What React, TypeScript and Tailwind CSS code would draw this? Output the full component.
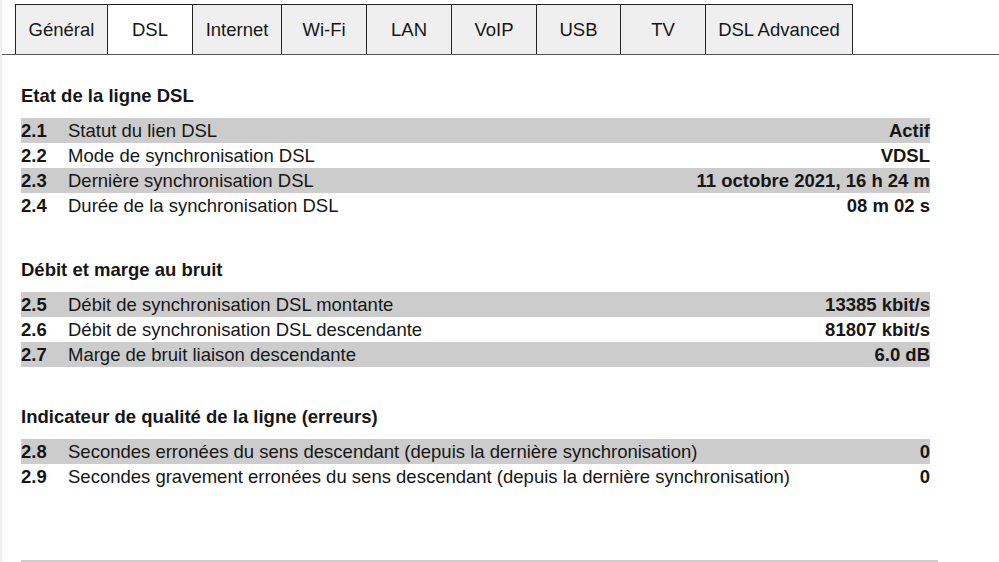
import React from 'react';

const TABS: { label: string; w: string; active?: boolean }[] = [
  { label: 'Général', w: 'w-[92px]' },
  { label: 'DSL', w: 'w-[85px]', active: true },
  { label: 'Internet', w: 'w-[89px]' },
  { label: 'Wi-Fi', w: 'w-[85px]' },
  { label: 'LAN', w: 'w-[85px]' },
  { label: 'VoIP', w: 'w-[85px]' },
  { label: 'USB', w: 'w-[84px]' },
  { label: 'TV', w: 'w-[85px]' },
  { label: 'DSL Advanced', w: 'w-[148px]' },
];

interface Row {
  num: string;
  label: string;
  value: string;
}

const SECTIONS: { title: string; mt: string; rows: Row[] }[] = [
  {
    title: 'Etat de la ligne DSL',
    mt: 'mt-[30px]',
    rows: [
      { num: '2.1', label: 'Statut du lien DSL', value: 'Actif' },
      { num: '2.2', label: 'Mode de synchronisation DSL', value: 'VDSL' },
      { num: '2.3', label: 'Dernière synchronisation DSL', value: '11 octobre 2021, 16 h 24 m' },
      { num: '2.4', label: 'Durée de la synchronisation DSL', value: '08 m 02 s' },
    ],
  },
  {
    title: 'Débit et marge au bruit',
    mt: 'mt-[41px]',
    rows: [
      { num: '2.5', label: 'Débit de synchronisation DSL montante', value: '13385 kbit/s' },
      { num: '2.6', label: 'Débit de synchronisation DSL descendante', value: '81807 kbit/s' },
      { num: '2.7', label: 'Marge de bruit liaison descendante', value: '6.0 dB' },
    ],
  },
  {
    title: 'Indicateur de qualité de la ligne (erreurs)',
    mt: 'mt-[39px]',
    rows: [
      { num: '2.8', label: 'Secondes erronées du sens descendant (depuis la dernière synchronisation)', value: '0' },
      { num: '2.9', label: 'Secondes gravement erronées du sens descendant (depuis la dernière synchronisation)', value: '0' },
    ],
  },
];

export default function App() {
  return (
    <div className="w-[999px] h-[562px] overflow-hidden bg-white border-l-2 border-[#efefef] text-[#161616] [font-family:'Liberation_Sans',Arial,sans-serif]">
      {/* Tabs */}
      <div className="pt-[4px] pl-[13px] border-b border-[#555]">
        <div className="flex">
          {TABS.map((t, i) => (
            <div key={t.label}
              className={`${t.w} h-[50px] flex items-center justify-center text-[18.5px] border-t border-l border-[#222] ${
                i === TABS.length - 1 ? 'border-r' : ''} ${t.active ? 'bg-white' : 'bg-[#efefef]'}`}>
              {t.label}
            </div>
          ))}
        </div>
      </div>

      {/* Sections */}
      <div className="pl-[19px] w-[928px]">
        {SECTIONS.map((s) => (
          <div key={s.title} className={s.mt}>
            <h2 className="text-[18.5px] font-bold leading-[22px] mb-[11px]">{s.title}</h2>
            <div>
              {s.rows.map((r, i) => (
                <div key={r.num}
                  className={`flex items-center h-[25px] text-[18.5px] ${i % 2 === 0 ? 'bg-[#cccccc]' : ''}`}>
                  <span className="w-[47px] font-bold">{r.num}</span>
                  <span className="flex-1">{r.label}</span>
                  <span className="font-bold">{r.value}</span>
                </div>
              ))}
            </div>
          </div>
        ))}
        <div className="mt-[71px] w-[917px] h-[2px] bg-[#cccccc]" />
      </div>
    </div>
  );
}
